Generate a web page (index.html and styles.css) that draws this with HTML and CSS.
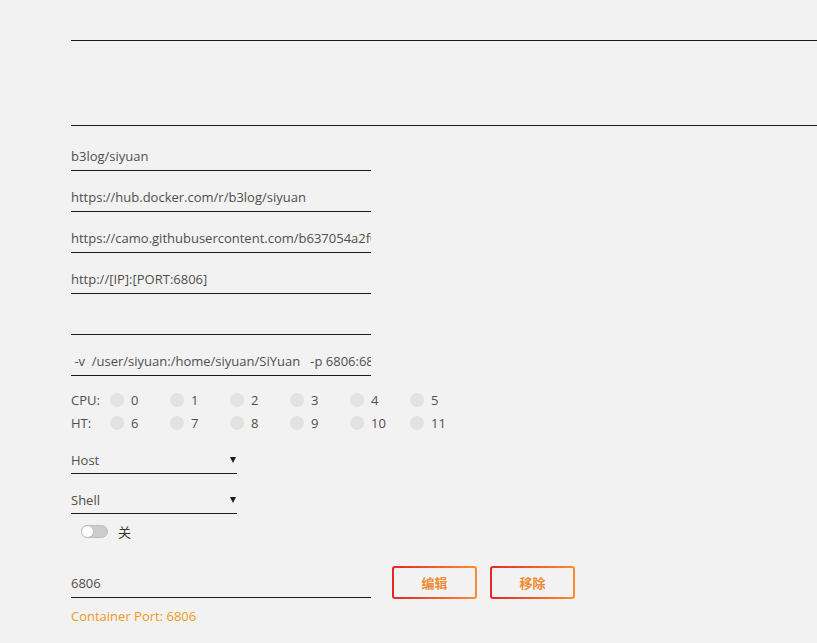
FILE: index.html
```html
<!DOCTYPE html>
<html lang="zh">
<head>
<meta charset="utf-8">
<title>Docker Template</title>
<link rel="stylesheet" href="styles.css">
</head>
<body>
<main class="form">
  <div class="wide top"></div>
  <div class="wide area"></div>

  <div class="fields">
    <input class="field" type="text" value="b3log/siyuan" readonly>
    <input class="field" type="text" value="https://hub.docker.com/r/b3log/siyuan" readonly>
    <input class="field" type="text" value="https://camo.githubusercontent.com/b637054a2f0b1c0e3d" readonly>
    <input class="field" type="text" value="http://[IP]:[PORT:6806]" readonly>
    <input class="field" type="text" value="" readonly>
    <input class="field" type="text" value=" -v  /user/siyuan:/home/siyuan/SiYuan   -p 6806:6806" readonly>
  </div>

  <div class="cpus">
    <div class="cpu-row">
      <span class="cpu-label">CPU:</span>
      <span class="cpu"><i class="dot"></i>0</span>
      <span class="cpu"><i class="dot"></i>1</span>
      <span class="cpu"><i class="dot"></i>2</span>
      <span class="cpu"><i class="dot"></i>3</span>
      <span class="cpu"><i class="dot"></i>4</span>
      <span class="cpu"><i class="dot"></i>5</span>
    </div>
    <div class="cpu-row">
      <span class="cpu-label">HT:</span>
      <span class="cpu"><i class="dot"></i>6</span>
      <span class="cpu"><i class="dot"></i>7</span>
      <span class="cpu"><i class="dot"></i>8</span>
      <span class="cpu"><i class="dot"></i>9</span>
      <span class="cpu"><i class="dot"></i>10</span>
      <span class="cpu"><i class="dot"></i>11</span>
    </div>
  </div>

  <div class="selects">
    <div class="select"><span>Host</span><span class="arrow"></span></div>
    <div class="select"><span>Shell</span><span class="arrow"></span></div>
  </div>

  <div class="switch-row">
    <span class="switch"><span class="knob"></span></span>
    <span class="switch-label">关</span>
  </div>

  <div class="port-row">
    <input class="field port" type="text" value="6806" readonly>
    <button class="btn" type="button">编辑</button>
    <button class="btn" type="button">移除</button>
  </div>
  <div class="hint">Container Port: 6806</div>
</main>
</body>
</html>
```

FILE: styles.css
```css
html, body {
  margin: 0;
  padding: 0;
  background: #f2f2f2;
}
body {
  font-family: "Open Sans", "Noto Sans", "Noto Sans CJK SC", sans-serif;
  font-size: 13px;
  color: #4f4f4f;
  overflow: hidden;
}
.form {
  padding-left: 71px;
  display: flex;
  flex-direction: column;
}
.wide {
  border-bottom: 1px solid #1c1c1c;
  margin-right: -20px;
}
.wide.top { height: 40px; }
.wide.area { height: 84px; }

.fields {
  display: flex;
  flex-direction: column;
  padding-top: 4px;
}
.field {
  box-sizing: border-box;
  width: 300px;
  height: 41px;
  padding: 16px 0 4px 0;
  line-height: 20px;
  margin: 0;
  border: none;
  border-bottom: 1px solid #1c1c1c;
  border-radius: 0;
  background: transparent;
  font: inherit;
  color: #4f4f4f;
  outline: none;
}

.cpus {
  display: flex;
  flex-direction: column;
  padding-top: 12px;
}
.cpu-row {
  display: flex;
  align-items: center;
  height: 23px;
}
.cpu-label {
  width: 39px;
}
.cpu {
  display: flex;
  align-items: center;
  width: 60px;
}
.dot {
  display: inline-block;
  width: 14px;
  height: 14px;
  border-radius: 50%;
  background: #e2e2e2;
  margin-right: 7px;
}

.selects {
  display: flex;
  flex-direction: column;
}
.select {
  box-sizing: border-box;
  width: 166px;
  height: 40px;
  padding: 16px 0 4px 0;
  line-height: 20px;
  border-bottom: 1px solid #1c1c1c;
  display: flex;
  justify-content: space-between;
  align-items: center;
}
.arrow {
  width: 0;
  height: 0;
  border-left: 3px solid transparent;
  border-right: 3px solid transparent;
  border-top: 6px solid #1c1c1c;
  margin-right: 1px;
  margin-top: 0;
}

.switch-row {
  display: flex;
  align-items: center;
  padding: 10px 0 0 10px;
  height: 14px;
}
.switch {
  box-sizing: border-box;
  position: relative;
  width: 27px;
  height: 13px;
  border-radius: 7px;
  background: #cccccc;
  border: 1px solid #bdbdbd;
  display: inline-flex;
}
.knob {
  box-sizing: border-box;
  width: 13px;
  height: 13px;
  margin: -1px 0 0 -1px;
  border-radius: 50%;
  background: #ffffff;
  border: 1px solid #bdbdbd;
}
.switch-label {
  margin-left: 10px;
  color: #333;
}

.port-row {
  display: flex;
  align-items: flex-end;
  padding-top: 19px;
}
.field.port {
  margin-right: 21px;
}
.btn {
  box-sizing: border-box;
  width: 85px;
  height: 33px;
  margin: 0 13px 0 0;
  padding: 0;
  border: 2px solid transparent;
  border-radius: 3px;
  background: linear-gradient(#f2f2f2, #f2f2f2) padding-box,
              linear-gradient(90deg, #e22828, #ff8c2f) border-box;
  color: #f08a35;
  font-family: "Noto Sans CJK SC", sans-serif;
  font-weight: bold;
  font-size: 13px;
  position: relative;
  top: 1px;
}
.hint {
  color: #f09a1d;
  padding-top: 9px;
  line-height: 18px;
}
```
